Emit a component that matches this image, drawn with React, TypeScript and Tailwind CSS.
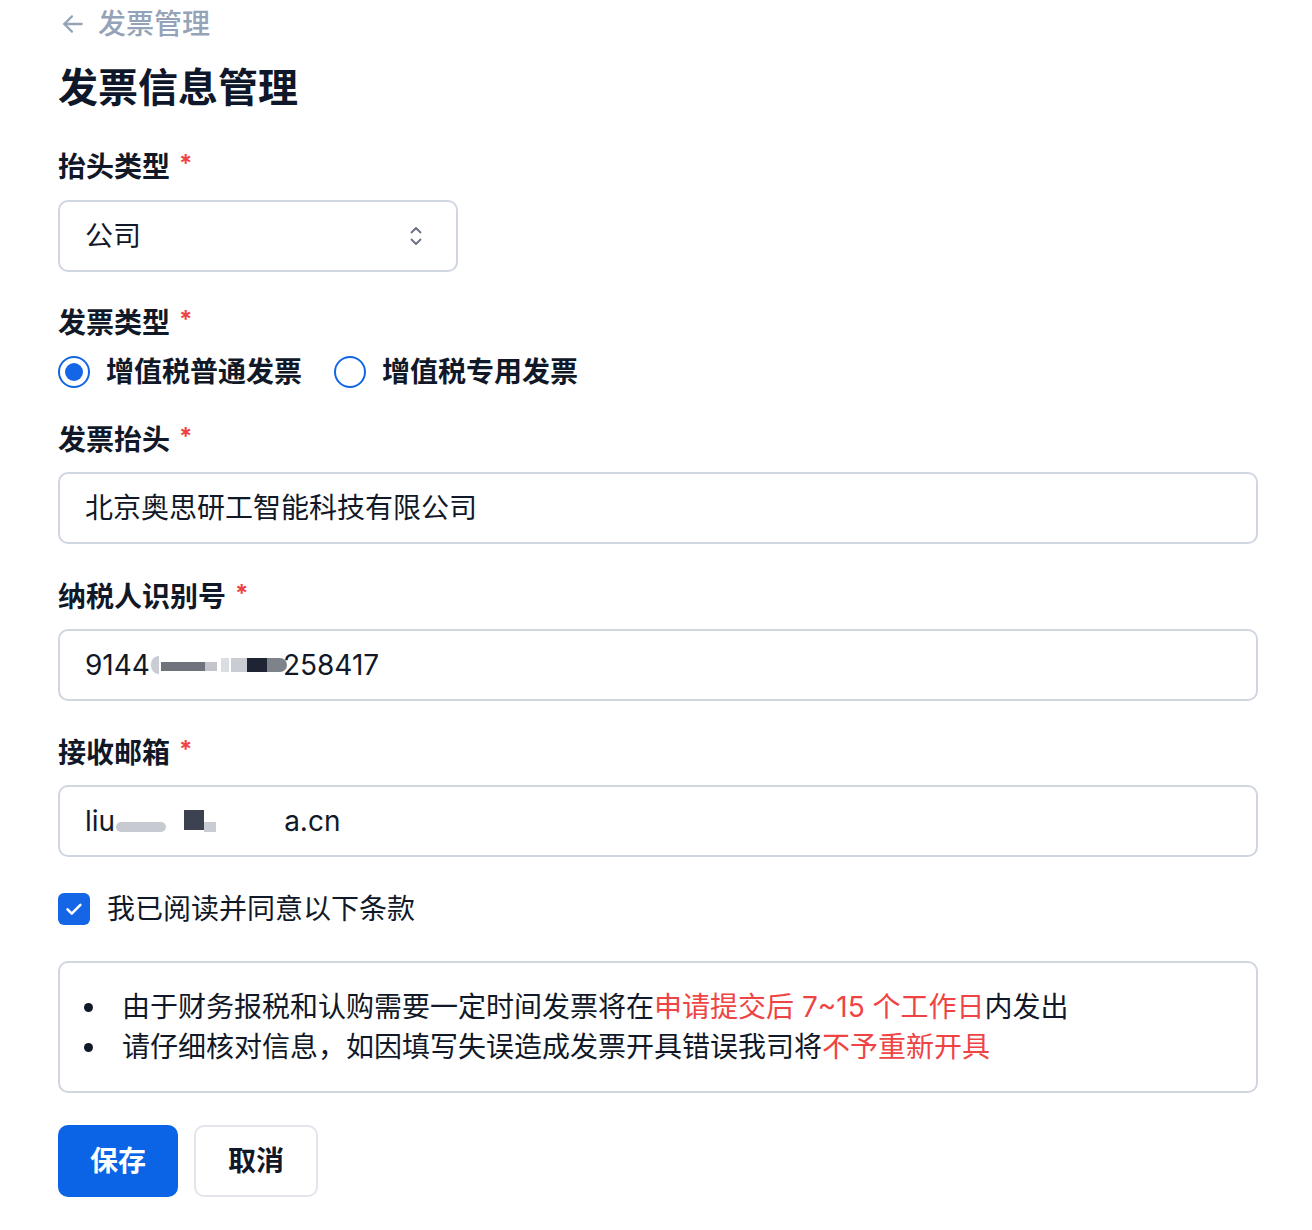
import React from "react";

const font = { fontFamily: 'Inter, "Noto Sans CJK SC", "Noto Sans", sans-serif' };

function Label({ children }: { children: React.ReactNode }) {
  return (
    <div className="h-[40px] flex items-center text-[28px] font-semibold text-[#111827] leading-none">
      <span>{children}</span>
      <span className="ml-[9px] text-[#ef4444] text-[24px] font-bold relative top-[-3px]">*</span>
    </div>
  );
}

function Field({ children }: { children: React.ReactNode }) {
  return (
    <div className="mt-[12px] h-[72px] w-[1200px] rounded-[10px] border-2 border-[#d0d6e0] bg-white flex items-center px-[25px] text-[28px] text-[#111827]">
      {children}
    </div>
  );
}

function Radio({ checked, label }: { checked: boolean; label: string }) {
  return (
    <div className="flex items-center h-[40px]">
      <span className="w-[32px] h-[32px] rounded-full border-[2.5px] border-[#1466e6] flex items-center justify-center bg-white">
        {checked && <span className="w-[18px] h-[18px] rounded-full bg-[#1466e6]" />}
      </span>
      <span className="ml-[16px] text-[28px] font-semibold text-[#111827]">{label}</span>
    </div>
  );
}

export default function App() {
  return (
    <div className="bg-white min-h-[1230px] pl-[58px] pt-[6px]" style={font}>
      <div className="flex items-center h-[36px] text-[#94a3b8] text-[28px]">
        <svg width="26" height="26" viewBox="0 0 24 24" fill="none" stroke="#94a3b8" strokeWidth="2.1" strokeLinecap="round" strokeLinejoin="round" className="ml-[2px]">
          <path d="M20 12H4" />
          <path d="M11 5l-7 7 7 7" />
        </svg>
        <span className="ml-[12px] font-medium">发票管理</span>
      </div>
      <h1 className="mt-[22px] h-[48px] flex items-center text-[40px] font-bold text-[#0f172a] leading-none">发票信息管理</h1>

      <div className="mt-[35px]">
        <Label>抬头类型</Label>
        <div className="mt-[13px] h-[72px] w-[400px] rounded-[10px] border-2 border-[#d0d6e0] bg-white flex items-center justify-between pl-[25px] pr-[33px] text-[28px] text-[#111827]">
          <span>公司</span>
          <svg width="14" height="24" viewBox="0 0 14 24" fill="none" stroke="#6b7280" strokeWidth="1.8" strokeLinecap="round" strokeLinejoin="round">
            <path d="M2.5 8.5L7 4l4.5 4.5" />
            <path d="M2.5 15.5L7 20l4.5-4.5" />
          </svg>
        </div>
      </div>

      <div className="mt-[31px]">
        <Label>发票类型</Label>
        <div className="mt-[9px] flex items-center gap-[32px]">
          <Radio checked label="增值税普通发票" />
          <Radio checked={false} label="增值税专用发票" />
        </div>
      </div>

      <div className="mt-[28px]">
        <Label>发票抬头</Label>
        <Field>北京奥思研工智能科技有限公司</Field>
      </div>

      <div className="mt-[33px]">
        <Label>纳税人识别号</Label>
        <Field>
          <span>9144</span>
          <span className="inline-block w-[8px] h-[18px] rounded-l-full bg-[#c9ccd3] ml-[1px]" />
          <span className="inline-block w-[44px] h-[9px] bg-[#6f737c] ml-[2px] mt-[2px]" />
          <span className="inline-block w-[12px] h-[9px] bg-[#c2c5cc] mt-[2px]" />
          <span className="inline-block w-[8px] h-[14px] bg-[#dadde2] ml-[4px]" />
          <span className="inline-block w-[16px] h-[14px] bg-[#c9ccd3] ml-[2px]" />
          <span className="inline-block w-[20px] h-[14px] bg-[#1e2433]" />
          <span className="inline-block w-[20px] h-[14px] bg-[#7e828b] rounded-r-full" />
          <span className="ml-[-4px]">258417</span>
        </Field>
      </div>

      <div className="mt-[32px]">
        <Label>接收邮箱</Label>
        <Field>
          <span>liu</span>
          <span className="inline-block w-[50px] h-[10px] bg-[#c7cad1] rounded-full mt-[12px] ml-[1px]" />
          <span className="inline-block w-[20px] h-[20px] bg-[#3c4250] ml-[18px] mt-[-2px]" />
          <span className="inline-block w-[12px] h-[10px] bg-[#c9ccd2] mt-[12px]" />
          <span className="inline-block w-[68px]" />
          <span>a.cn</span>
        </Field>
      </div>

      <div className="mt-[32px] flex items-center h-[40px]">
        <span className="w-[32px] h-[32px] rounded-[6px] bg-[#1466e6] flex items-center justify-center">
          <svg width="22" height="22" viewBox="0 0 24 24" fill="none" stroke="white" strokeWidth="2.8" strokeLinecap="round" strokeLinejoin="round">
            <path d="M5 12.5l4.5 4.5L19 7.5" />
          </svg>
        </span>
        <span className="ml-[17px] text-[28px] text-[#111827]">我已阅读并同意以下条款</span>
      </div>

      <div className="mt-[32px] w-[1200px] h-[132px] rounded-[10px] border-2 border-[#d0d6e0] flex flex-col justify-center pl-[20px] text-[28px] text-[#111827]">
        <div className="flex items-center h-[40px]">
          <span className="w-[9px] h-[9px] rounded-full bg-[#111827] ml-[4px]" />
          <span className="ml-[29px]">
            由于财务报税和认购需要一定时间发票将在<span className="text-[#ef4444]">申请提交后 7~15 个工作日</span>内发出
          </span>
        </div>
        <div className="flex items-center h-[40px]">
          <span className="w-[9px] h-[9px] rounded-full bg-[#111827] ml-[4px]" />
          <span className="ml-[29px]">
            请仔细核对信息，如因填写失误造成发票开具错误我司将<span className="text-[#ef4444]">不予重新开具</span>
          </span>
        </div>
      </div>

      <div className="mt-[32px] flex gap-[16px]">
        <button className="w-[120px] h-[72px] rounded-[10px] bg-[#0b63e5] text-white text-[28px] font-bold">保存</button>
        <button className="w-[124px] h-[72px] rounded-[10px] bg-white border-2 border-[#e2e6ec] text-[#111827] text-[28px] font-bold">取消</button>
      </div>
    </div>
  );
}
